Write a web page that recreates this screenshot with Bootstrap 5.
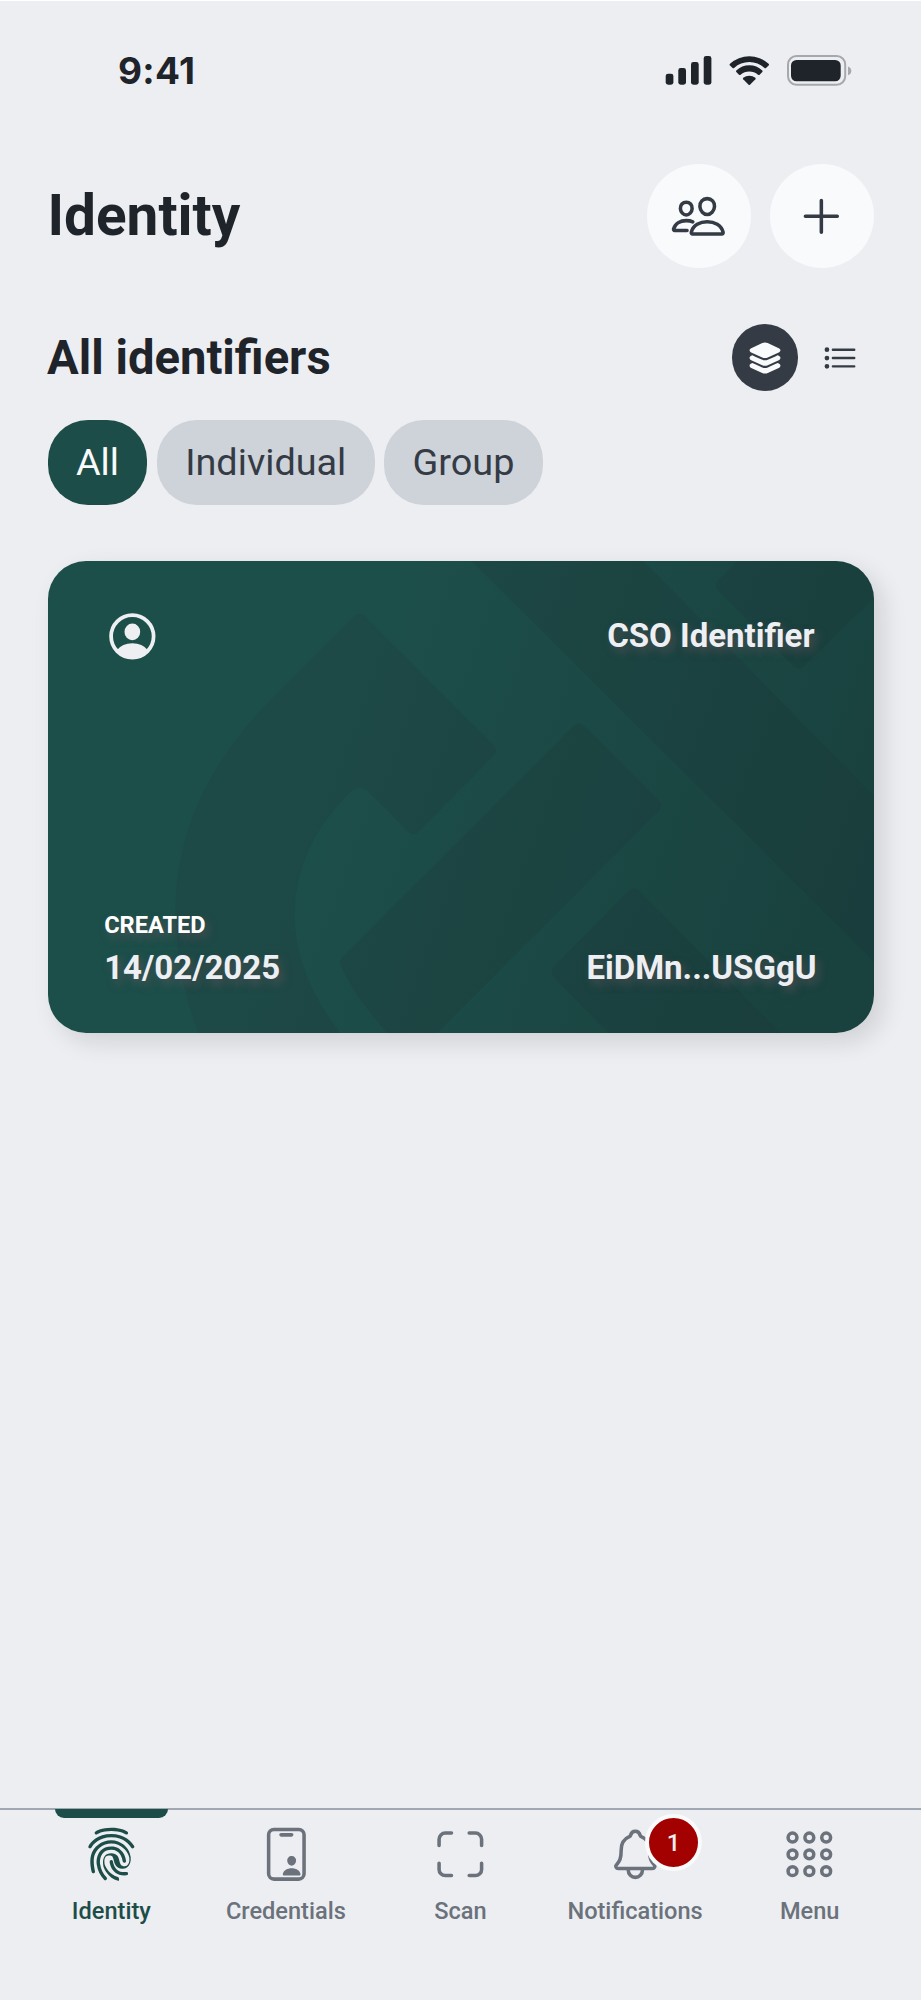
<!DOCTYPE html>
<html lang="en">
<head>
<meta charset="utf-8">
<meta name="viewport" content="width=device-width, initial-scale=1">
<title>Identity</title>
<link href="https://cdn.jsdelivr.net/npm/bootstrap@5.3.0/dist/css/bootstrap.min.css" rel="stylesheet">
<style>
  :root { --ink:#1f242b; --slate:#343b45; --brand:#1d4d48; --muted:#6b727b; --page:#edeef2; --chip:#ced2d9; --paper:#f9fafc; }
  body { font-family:Roboto,"Liberation Sans",sans-serif; background:var(--page); color:var(--ink); }
  .phone { height:2000px; border-top:1px solid #fff; }
  .status { height:139px; padding:0 69px 0 118px; }
  .clock { font:700 37px/46px Inter,sans-serif; letter-spacing:.3px; }
  .topbar { height:104px; margin-top:24px; padding:0 47.5px; }
  .topbar h1 { font-size:56.7px; font-weight:700; line-height:66px; }
  .round-btn { width:104px; height:104px; background:var(--paper); color:var(--slate); }
  .ion { width:56.7px; height:56.7px; display:block; }
  .ion-s { width:38px; height:38px; display:block; }
  .line { fill:none; stroke:currentColor; stroke-width:32; stroke-linecap:round; stroke-linejoin:round; }
  .section-row { height:67px; margin-top:56px; padding:0 47.5px 0 47px; }
  .section-row h2 { font-size:47.2px; font-weight:700; line-height:56px; }
  .view-btn { width:66.5px; height:66.5px; color:var(--slate); }
  .view-btn.on { background:var(--slate); color:var(--paper); }
  .chips { margin-top:28.5px; padding-left:47.5px; gap:9.5px; }
  .chip { height:85.5px; padding:0 28.4px; border-radius:40px; font-size:37.8px; line-height:85px; background:var(--chip); color:var(--slate); }
  .chip.on { background:var(--brand); color:var(--paper); }
  .id-card { height:472px; margin:56px 47.5px 0; border-radius:38px; background:linear-gradient(110deg,#1d4f4a 35%,#19413e 95%); box-shadow:9px 9px 24px rgba(0,0,0,.12); color:#eeeff3; font-weight:700; overflow:hidden; }
  .id-art { inset:0; width:826px; height:472px; }
  .id-body { height:100%; padding:47px 57px 46px 56.7px; }
  .glow { font-size:33px; line-height:38px; text-shadow:4px 5px 9px rgba(120,90,100,.5); }
  .caption { font-size:23.6px; line-height:28px; text-shadow:4px 5px 9px rgba(120,90,100,.5); color:#fff; }
  .tabs { height:192.5px; border-top:2.4px solid #a0a8b3; padding:0 24px; }
  .tab { padding-top:16.7px; color:var(--muted); font-size:23.6px; font-weight:500; line-height:28px; gap:14px; }
  .tab.on { color:var(--brand); }
  .tab.on::before { content:""; position:absolute; top:-1px; left:50%; width:113px; height:9.5px; margin-left:-56.5px; background:var(--brand); border-radius:0 0 9px 9px; }
  .count { left:50%; top:4.5px; margin-left:10px; width:57px; height:57px; border:4.7px solid var(--paper); background:#a30000; color:var(--page); font-size:23.6px; }
</style>
</head>
<body>
<div class="phone d-flex flex-column">
  <div class="status d-flex align-items-center justify-content-between">
    <div class="clock">9:41</div>
    <svg width="188" height="34" viewBox="664 53 188 34" fill="#1f242b">
      <rect x="665.7" y="72.7" width="7.7" height="11" rx="2.4"/><rect x="678.3" y="67" width="7.7" height="16.7" rx="2.4"/><rect x="691" y="61" width="7.7" height="22.7" rx="2.4"/><rect x="703.7" y="55" width="7.7" height="28.7" rx="2.4"/>
      <path d="M730 62.8A28.5 28.5 0 0 1 768.6 62.8Q769.5 63.6 768.6 64.5L766 67Q765.300 67.7 764.5 67A22.500 22.500 0 0 0 734.100 67Q733.300 67.7 732.600 67L730 64.500Q729.100 63.600 730 62.800Z"/>
      <path d="M736.300 69.400A19 19 0 0 1 762.300 69.400Q763 70.200 762.300 71L759.600 73.700Q758.800 74.400 758 73.700A13.500 13.500 0 0 0 740.600 73.700Q739.800 74.400 739 73.700L736.300 71Q735.600 70.200 736.300 69.400Z"/>
      <path d="M743.200 76.800A9.700 9.700 0 0 1 755.400 76.800Q756 77.500 755.400 78.200L750 83.700Q749.300 84.400 748.600 83.700L743.200 78.200Q742.600 77.500 743.200 76.800Z"/>
      <rect x="788" y="55" width="57.200" height="28.800" rx="8.500" fill="none" stroke="#a6a8ac" stroke-width="2"/>
      <rect x="791" y="59" width="49.700" height="21.300" rx="5.500"/>
      <path d="M848 65.500Q851.300 66.800 851.300 70T848 74.300Z" fill="#a6a8ac"/>
    </svg>
  </div>

  <header class="topbar d-flex align-items-center">
    <h1 class="m-0 me-auto">Identity</h1>
    <button class="round-btn btn border-0 rounded-circle p-0 d-flex align-items-center justify-content-center" aria-label="Connections">
      <svg class="ion line" viewBox="0 0 512 512"><path d="M402 168c-2.930 40.670-33.100 72-66 72s-63.120-31.320-66-72c-3-42.310 26.370-72 66-72s69 30.460 66 72z"/><path d="M336 304c-65.170 0-127.840 32.370-143.540 95.410-2.080 8.340 3.150 16.590 11.720 16.590h263.650c8.570 0 13.770-8.250 11.720-16.590C463.850 335.360 401.180 304 336 304z"/><path d="M200 185.940c-2.340 32.480-26.720 58.060-53 58.060s-50.700-25.570-53-58.060C91.610 152.150 115.340 128 147 128s55.390 24.770 53 57.940z"/><path d="M206 306c-18.050-8.270-37.930-11.450-59-11.450-52 0-102.100 25.850-114.650 76.200-1.650 6.660 2.530 13.250 9.370 13.250H154"/></svg>
    </button>
    <button class="round-btn btn border-0 rounded-circle p-0 d-flex align-items-center justify-content-center" style="margin-left:19px" aria-label="Add">
      <svg class="ion line" viewBox="0 0 512 512"><path d="M256 112v288M400 256H112"/></svg>
    </button>
  </header>

  <div class="section-row d-flex align-items-center">
    <h2 class="m-0 me-auto">All identifiers</h2>
    <div class="view-btn on rounded-circle d-flex align-items-center justify-content-center">
      <svg class="ion-s" viewBox="0 0 512 512" fill="currentColor"><path d="M256 256c-13.470 0-26.940-2.390-37.440-7.170l-148-67.490C63.790 178.260 48 169.250 48 152.240s15.790-26 22.580-29.120l149.280-68.070c20.570-9.400 51.610-9.400 72.190 0l149.370 68.070c6.790 3.090 22.580 12.100 22.580 29.120s-15.800 26-22.580 29.110l-148 67.480C282.940 253.610 269.470 256 256 256z"/><path d="M441.360 226.810L426.270 220l-38.770 17.740-94 43c-10.500 4.800-24 7.190-37.440 7.190s-26.930-2.390-37.420-7.190l-94.070-43L85.790 220l-15.220 6.840C63.790 229.930 48 239 48 256s15.790 26.080 22.560 29.170l148 67.630C229 357.600 242.490 360 256 360s26.940-2.400 37.440-7.190l147.870-67.610c6.810-3.090 22.690-12.110 22.690-29.200s-15.770-26.070-22.640-29.190z"/><path d="M441.360 330.800l-15.090-6.800-38.770 17.730-94 42.950c-10.500 4.780-24 7.180-37.440 7.180s-26.930-2.390-37.420-7.180l-94.070-43L85.790 324l-15.220 6.840C63.790 333.930 48 343 48 360s15.790 26.070 22.560 29.150l148 67.590C229 461.520 242.540 464 256 464s26.880-2.480 37.380-7.270l147.920-67.570C448.160 386.080 464 377.060 464 360s-15.770-26.070-22.640-29.200z"/></svg>
    </div>
    <div class="view-btn rounded-circle d-flex align-items-center justify-content-center" style="margin-left:9px">
      <svg class="ion-s line" viewBox="0 0 512 512"><path d="M160 144h288M160 256h288M160 368h288"/><circle cx="80" cy="144" r="16"/><circle cx="80" cy="256" r="16"/><circle cx="80" cy="368" r="16"/></svg>
    </div>
  </div>

  <div class="chips d-flex">
    <div class="chip on">All</div>
    <div class="chip">Individual</div>
    <div class="chip">Group</div>
  </div>

  <section class="id-card position-relative">
    <svg class="id-art position-absolute" viewBox="47.500 561 826 472" fill="#212b33" fill-opacity=".16">
      <path d="M353 617Q359 610 365 617L493 745Q498 750.700 493 756L418 832Q413.300 837 408 832L368 791.700Q358 783 346.700 795Q294 849 294 913.300Q294 975 340 1033V1040H198V1033Q175 975 175 906Q177 793 273.300 696.700Z"/>
      <path d="M342 957L573 726Q578.300 721 584 726L658 800Q663 806 658 811L436.700 1033V1040H386.700V1033Q353 995 340.500 966Q338.500 961 342 957Z"/>
      <path d="M554 966L628 891Q633.300 886 639 891L780 1033V1040H608V1033L554 978Q549 971.700 554 966Z"/>
      <path d="M465 555H637L880 803V968Z"/>
      <path d="M743 555L718 580Q713 586 718 591L793 666Q798.300 671 804 666L880 591V555Z"/>
    </svg>
    <div class="id-body position-relative d-flex flex-column justify-content-between">
      <div class="d-flex justify-content-between align-items-center">
        <svg class="ion" viewBox="0 0 512 512" fill="currentColor"><circle cx="256" cy="256" r="192" fill="none" stroke="currentColor" stroke-width="34"/><ellipse cx="256" cy="216" rx="71" ry="75"/><path d="M118 380Q164 318 256 318T394 380Q340 452 256 452T118 380Z"/></svg>
        <div class="glow" style="margin-right:2px">CSO Identifier</div>
      </div>
      <div class="d-flex justify-content-between align-items-end">
        <div>
          <div class="caption">CREATED</div>
          <div class="glow" style="margin-top:10.500px">14/02/2025</div>
        </div>
        <div class="glow">EiDMn...USGgU</div>
      </div>
    </div>
  </section>

  <nav class="tabs d-flex mt-auto">
    <div class="tab on w-100 position-relative d-flex flex-column align-items-center">
      <svg class="ion" viewBox="0 0 512 512" fill="currentColor"><path d="M63.280 202a15.290 15.290 0 01-7.700-2 14.840 14.840 0 01-5.520-20.460C69.340 147.360 128 72.250 256 72.250c55.470 0 104.120 14.570 144.530 43.290 33.260 23.570 51.900 50.250 60.780 63.100a14.790 14.790 0 01-4 20.790 15.520 15.520 0 01-21.240-4C420 172.320 371 102 256 102c-112.250 0-163 64.710-179.530 92.460A15 15 0 0163.280 202z"/><path d="M320.490 496a15.310 15.310 0 01-3.790-.430c-92.850-23-127.520-115.820-128.930-119.680l-.220-.850c-.760-2.680-19.390-66.330 9.210-103.610 13.110-17 33.050-25.720 59.380-25.720 24.480 0 42.140 7.610 54.280 23.360 10 12.860 14 28.720 17.870 44 8.130 31.820 14 48.530 47.790 50.250 14.840.750 24.590-7.930 30.120-15.320 14.950-20.150 17.550-53 6.280-82C398 228.570 346.610 158 256 158c-38.680 0-74.220 12.430-102.720 35.790C129.670 213.260 111 240.720 102.710 268.900c-15.460 52.820 5.530 138.310 5.750 139.170A14.940 14.940 0 0197.470 426a15.440 15.440 0 01-18.850-10.930C76.190 406.420 55.200 322.210 73.160 260.890 93.850 190 163.590 128.360 256 128.360c42.490 0 81.430 14.460 113.100 41.790 24.490 21.110 44.200 50 54.060 79.400 14.520 39.320 10.400 81.750-10.290 109.290-13.760 18.430-34.240 28-57.630 26.790-60.560-3-70.200-48-77.570-76.930-7.540-29.900-12.570-42.430-39.650-42.430-16.250 0-27.720 4.610-34.980 14.140-9.640 12.640-10.510 32.890-9.750 47.460.650 13.180 4.330 24.750 4.330 24.750 1.190 3.180 32.390 86.460 116.580 107.370a15 15 0 0110.830 18.210A15.430 15.430 0 01320.490 496z"/><path d="M201.310 489.140a15.500 15.500 0 01-11.160-4.710c-37.160-39-58.180-82.610-66.090-137.140V347c-4.440-36.100 2.060-87.210 33.910-122.350 23.510-25.930 56.560-39.110 98.060-39.110 49.080 0 87.650 22.820 111.700 65.790 17.450 31.290 20.910 62.470 21 63.750a15.070 15.070 0 01-13.650 16.400 15.260 15.260 0 01-16.790-13.290A154.100 154.100 0 00340.430 265c-18.640-32.890-47-49.610-84.520-49.610-31.860 0-57.200 9.650-75 28.820-29.120 31.610-29.120 79.180-26.400 98.250 6.930 48.220 25.460 86.580 58.180 120.860a14.700 14.700 0 01-.760 21.110 15.440 15.440 0 01-10.620 4.710z"/><path d="M372.500 446.180c-32.500 0-60.130-9-82.240-26.890-44.420-35.790-49.400-94.080-49.620-96.540a15.270 15.270 0 0130.450-2.360c.110.860 4.550 48.540 38.790 76 20.260 16.180 47.340 22.600 80.620 18.850a15.200 15.200 0 0116.910 13.180 14.920 14.920 0 01-13.440 16.500 187 187 0 01-21.470 1.260z"/><path d="M398.180 48.790C385.500 40.540 340.540 16 256 16c-88.740 0-133.810 27.110-143.780 34a11.590 11.590 0 00-1.840 1.400 14.870 14.870 0 00-5.310 11.250A15.060 15.060 0 00120.380 77.500a15.560 15.560 0 008.880-2.790c.430-.320 39.220-28.820 126.770-28.820S382.580 74.290 383 74.500a15.250 15.250 0 009.210 3A15.060 15.060 0 00407.500 62.500a14.900 14.900 0 00-9.320-13.710z"/></svg>
      <span>Identity</span>
    </div>
    <div class="tab w-100 d-flex flex-column align-items-center">
      <svg class="ion line" viewBox="0 0 512 512"><rect x="96" y="32" width="320" height="448" rx="48"/><path d="M208 80h96"/><path fill="currentColor" stroke="none" d="M333.480 284.510A39.650 39.650 0 00304 272c-11.600 0-22.090 4.410-29.540 12.430s-11.200 19.120-10.340 31C265.830 338.910 283.720 358 304 358s38.140-19.090 39.870-42.550c.880-11.780-2.820-22.770-10.390-30.940zM371.690 448H236.310a12.050 12.050 0 01-9.310-4 13.350 13.350 0 01-2.640-11.280c3.080-15.670 12.820-28.860 28.190-38.150C266.280 386.330 284.500 381.500 304 381.500s37.700 4.830 51.450 13.130c15.370 9.250 25.110 22.440 28.190 38.130A13.370 13.370 0 01381 444.050 12.050 12.050 0 01371.690 448z"/></svg>
      <span>Credentials</span>
    </div>
    <div class="tab w-100 d-flex flex-column align-items-center">
      <svg class="ion line" viewBox="0 0 512 512"><path d="M336 448h56a56 56 0 0056-56v-56M448 176v-56a56 56 0 00-56-56h-56M176 448h-56a56 56 0 01-56-56v-56M64 176v-56a56 56 0 0156-56h56"/></svg>
      <span>Scan</span>
    </div>
    <div class="tab w-100 position-relative d-flex flex-column align-items-center">
      <svg class="ion line" viewBox="0 0 512 512"><path d="M427.680 351.430C402 320 383.870 304 383.870 217.350 383.870 138 343.350 109.730 310 96c-4.430-1.820-8.600-6-9.950-10.550C294.200 65.540 277.800 48 256 48s-38.210 17.550-44 37.470c-1.350 4.600-5.520 8.710-9.950 10.530-33.390 13.750-73.870 41.920-73.870 121.350C128.130 304 110 320 84.320 351.430 73.680 364.450 83 384 101.610 384h308.880c18.510 0 27.770-19.610 17.190-32.570zM320 384v16a64 64 0 01-128 0v-16"/></svg>
      <span>Notifications</span>
      <span class="count position-absolute rounded-circle d-flex align-items-center justify-content-center">1</span>
    </div>
    <div class="tab w-100 d-flex flex-column align-items-center">
      <svg class="ion line" viewBox="0 0 512 512"><circle cx="104" cy="104" r="40"/><circle cx="256" cy="104" r="40"/><circle cx="408" cy="104" r="40"/><circle cx="104" cy="256" r="40"/><circle cx="256" cy="256" r="40"/><circle cx="408" cy="256" r="40"/><circle cx="104" cy="408" r="40"/><circle cx="256" cy="408" r="40"/><circle cx="408" cy="408" r="40"/></svg>
      <span>Menu</span>
    </div>
  </nav>
</div>
<script src="https://cdn.jsdelivr.net/npm/bootstrap@5.3.0/dist/js/bootstrap.bundle.min.js"></script>
</body>
</html>
